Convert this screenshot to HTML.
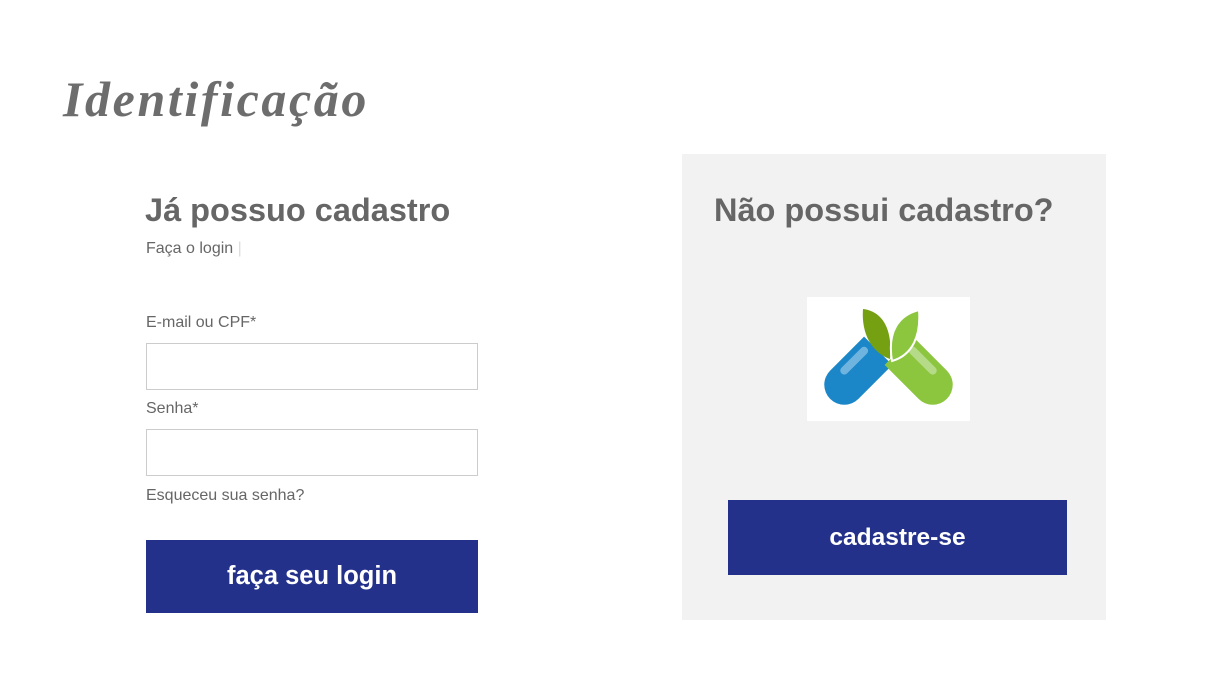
<!DOCTYPE html>
<html><head><meta charset="utf-8"><style>
body{margin:0;width:1225px;height:687px;background:#fff;position:relative;overflow:hidden;font-family:"Liberation Sans",sans-serif;color:#666}
.a{position:absolute;white-space:nowrap}
h1{position:absolute;left:63px;top:70px;margin:0;font:bold italic 50px "Liberation Serif",serif;color:#6d6d6d;letter-spacing:2.6px}
.h2{font-weight:bold;font-size:32.5px;color:#666}
.s{font-size:16px;color:#666}
.in{position:absolute;left:146px;width:330px;height:45px;border:1px solid #ccc;background:#fff}
.btn{position:absolute;background:#24318a;color:#fff;font-weight:bold;display:flex;align-items:center;justify-content:center}
</style></head><body>
<h1>Identificação</h1>
<div class="a h2" style="left:145px;top:192px">Já possuo cadastro</div>
<div class="a s" style="left:146px;top:240px">Faça o login <span style="color:#ddd">|</span></div>
<div class="a s" style="left:146px;top:314px">E-mail ou CPF*</div>
<div class="in" style="top:343px"></div>
<div class="a s" style="left:146px;top:400px">Senha*</div>
<div class="in" style="top:429px"></div>
<div class="a s" style="left:146px;top:487px">Esqueceu sua senha?</div>
<div class="btn" style="left:146px;top:540px;width:332px;height:73px;font-size:25.5px">faça seu login</div>
<div style="position:absolute;left:682px;top:154px;width:424px;height:466px;background:#f2f2f2"></div>
<div class="a h2" style="left:714px;top:192px">Não possui cadastro?</div>
<div style="position:absolute;left:807px;top:297px;width:163px;height:124px;background:#fff">
<svg width="163" height="124" viewBox="0 0 163 124">
<g transform="translate(50,75) rotate(-45)"><path d="M-18,-20 H30 V20 H-18 A20,20 0 0 1 -18,-20Z" fill="#1b87c9"/><rect x="-12" y="-14" width="36" height="8" rx="4" fill="#6fb3df"/></g>
<g transform="translate(113,75) rotate(45)"><path d="M-30,-20 H18 A20,20 0 0 1 18,20 H-30Z" fill="#8cc63f"/><rect x="-24" y="-14" width="36" height="8" rx="4" fill="#b6db88"/></g>
<path d="M56,12 C74,14 86,30 83,62 C66,56 54,38 56,12Z" fill="#74a012"/>
<path d="M112,13 C92,18 80,34 85,64 C106,58 114,38 112,13Z" fill="#8cc63f" stroke="#fff" stroke-width="2"/>
</svg></div>
<div class="btn" style="left:728px;top:500px;width:339px;height:75px;font-size:24.5px">cadastre-se</div>
</body></html>
